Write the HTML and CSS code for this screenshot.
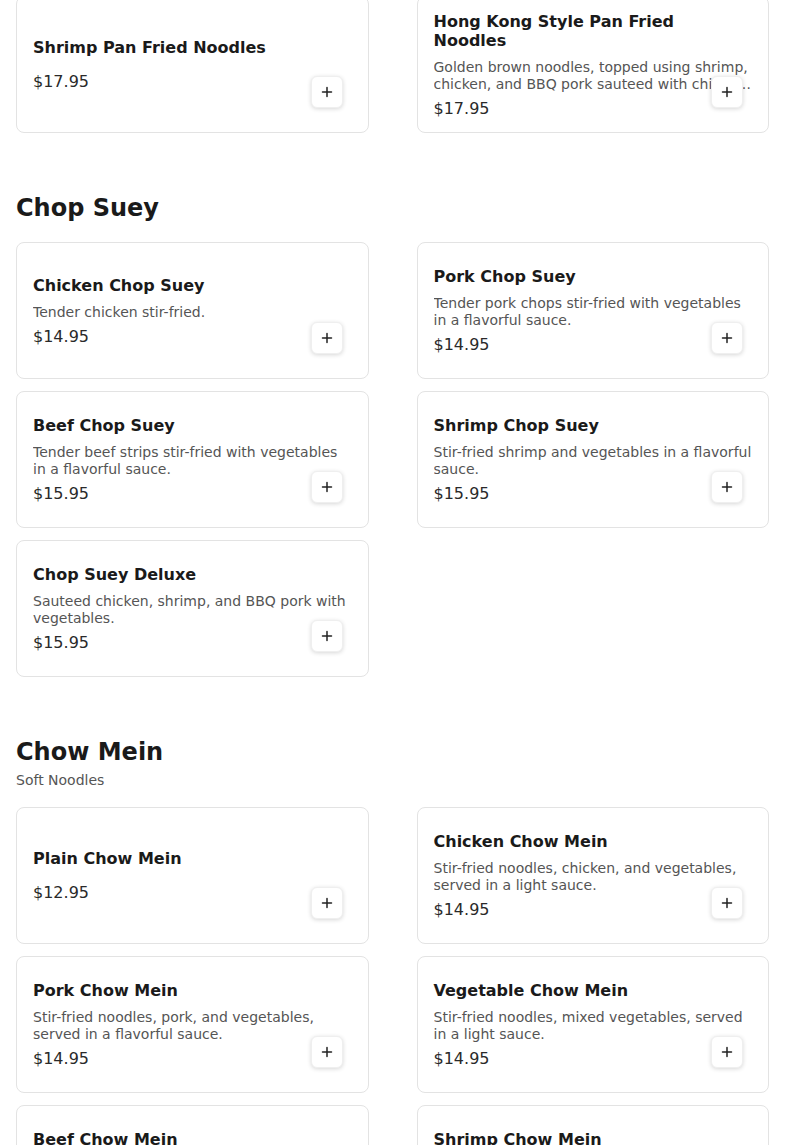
FILE: index.html
```html
<!DOCTYPE html>
<html>
<head>
<meta charset="utf-8">
<link rel="stylesheet" href="styles.css">
</head>
<body>
<main class="menu">
  <section class="section first">
    <div class="grid">
      <div class="card">
        <div class="info">
          <h3 class="name">Shrimp Pan Fried Noodles</h3>
          <div class="price">$17.95</div>
        </div>
        <button class="add" aria-label="Add"><svg viewBox="0 0 12 12" width="12" height="12"><path d="M6 1.5v9M1.5 6h9" stroke="#222" stroke-width="1.5" stroke-linecap="round"/></svg></button>
      </div>
      <div class="card">
        <div class="info">
          <h3 class="name">Hong Kong Style Pan Fried Noodles</h3>
          <p class="desc">Golden brown noodles, topped using shrimp, chicken, and BBQ pork sauteed with chinese vegetables in a brown sauce.</p>
          <div class="price">$17.95</div>
        </div>
        <button class="add" aria-label="Add"><svg viewBox="0 0 12 12" width="12" height="12"><path d="M6 1.5v9M1.5 6h9" stroke="#222" stroke-width="1.5" stroke-linecap="round"/></svg></button>
      </div>
    </div>
  </section>

  <section class="section">
    <header class="section-head">
      <h2 class="title">Chop Suey</h2>
    </header>
    <div class="grid">
      <div class="card">
        <div class="info">
          <h3 class="name">Chicken Chop Suey</h3>
          <p class="desc">Tender chicken stir-fried.</p>
          <div class="price">$14.95</div>
        </div>
        <button class="add" aria-label="Add"><svg viewBox="0 0 12 12" width="12" height="12"><path d="M6 1.5v9M1.5 6h9" stroke="#222" stroke-width="1.5" stroke-linecap="round"/></svg></button>
      </div>
      <div class="card">
        <div class="info">
          <h3 class="name">Pork Chop Suey</h3>
          <p class="desc">Tender pork chops stir-fried with vegetables in a flavorful sauce.</p>
          <div class="price">$14.95</div>
        </div>
        <button class="add" aria-label="Add"><svg viewBox="0 0 12 12" width="12" height="12"><path d="M6 1.5v9M1.5 6h9" stroke="#222" stroke-width="1.5" stroke-linecap="round"/></svg></button>
      </div>
      <div class="card">
        <div class="info">
          <h3 class="name">Beef Chop Suey</h3>
          <p class="desc">Tender beef strips stir-fried with vegetables in a flavorful sauce.</p>
          <div class="price">$15.95</div>
        </div>
        <button class="add" aria-label="Add"><svg viewBox="0 0 12 12" width="12" height="12"><path d="M6 1.5v9M1.5 6h9" stroke="#222" stroke-width="1.5" stroke-linecap="round"/></svg></button>
      </div>
      <div class="card">
        <div class="info">
          <h3 class="name">Shrimp Chop Suey</h3>
          <p class="desc">Stir-fried shrimp and vegetables in a flavorful sauce.</p>
          <div class="price">$15.95</div>
        </div>
        <button class="add" aria-label="Add"><svg viewBox="0 0 12 12" width="12" height="12"><path d="M6 1.5v9M1.5 6h9" stroke="#222" stroke-width="1.5" stroke-linecap="round"/></svg></button>
      </div>
      <div class="card">
        <div class="info">
          <h3 class="name">Chop Suey Deluxe</h3>
          <p class="desc">Sauteed chicken, shrimp, and BBQ pork with vegetables.</p>
          <div class="price">$15.95</div>
        </div>
        <button class="add" aria-label="Add"><svg viewBox="0 0 12 12" width="12" height="12"><path d="M6 1.5v9M1.5 6h9" stroke="#222" stroke-width="1.5" stroke-linecap="round"/></svg></button>
      </div>
    </div>
  </section>

  <section class="section">
    <header class="section-head">
      <h2 class="title">Chow Mein</h2>
      <p class="subtitle">Soft Noodles</p>
    </header>
    <div class="grid">
      <div class="card">
        <div class="info">
          <h3 class="name">Plain Chow Mein</h3>
          <div class="price">$12.95</div>
        </div>
        <button class="add" aria-label="Add"><svg viewBox="0 0 12 12" width="12" height="12"><path d="M6 1.5v9M1.5 6h9" stroke="#222" stroke-width="1.5" stroke-linecap="round"/></svg></button>
      </div>
      <div class="card">
        <div class="info">
          <h3 class="name">Chicken Chow Mein</h3>
          <p class="desc">Stir-fried noodles, chicken, and vegetables, served in a light sauce.</p>
          <div class="price">$14.95</div>
        </div>
        <button class="add" aria-label="Add"><svg viewBox="0 0 12 12" width="12" height="12"><path d="M6 1.5v9M1.5 6h9" stroke="#222" stroke-width="1.5" stroke-linecap="round"/></svg></button>
      </div>
      <div class="card">
        <div class="info">
          <h3 class="name">Pork Chow Mein</h3>
          <p class="desc">Stir-fried noodles, pork, and vegetables, served in a flavorful sauce.</p>
          <div class="price">$14.95</div>
        </div>
        <button class="add" aria-label="Add"><svg viewBox="0 0 12 12" width="12" height="12"><path d="M6 1.5v9M1.5 6h9" stroke="#222" stroke-width="1.5" stroke-linecap="round"/></svg></button>
      </div>
      <div class="card">
        <div class="info">
          <h3 class="name">Vegetable Chow Mein</h3>
          <p class="desc">Stir-fried noodles, mixed vegetables, served in a light sauce.</p>
          <div class="price">$14.95</div>
        </div>
        <button class="add" aria-label="Add"><svg viewBox="0 0 12 12" width="12" height="12"><path d="M6 1.5v9M1.5 6h9" stroke="#222" stroke-width="1.5" stroke-linecap="round"/></svg></button>
      </div>
      <div class="card">
        <div class="info">
          <h3 class="name">Beef Chow Mein</h3>
          <p class="desc">Stir-fried noodles, beef, and vegetables, served in a flavorful sauce.</p>
          <div class="price">$15.95</div>
        </div>
        <button class="add" aria-label="Add"><svg viewBox="0 0 12 12" width="12" height="12"><path d="M6 1.5v9M1.5 6h9" stroke="#222" stroke-width="1.5" stroke-linecap="round"/></svg></button>
      </div>
      <div class="card">
        <div class="info">
          <h3 class="name">Shrimp Chow Mein</h3>
          <p class="desc">Stir-fried noodles, shrimp, and vegetables, served in a flavorful sauce.</p>
          <div class="price">$15.95</div>
        </div>
        <button class="add" aria-label="Add"><svg viewBox="0 0 12 12" width="12" height="12"><path d="M6 1.5v9M1.5 6h9" stroke="#222" stroke-width="1.5" stroke-linecap="round"/></svg></button>
      </div>
    </div>
  </section>
</main>
</body>
</html>
```

FILE: styles.css
```css
* { box-sizing: border-box; }

html, body {
  margin: 0;
  padding: 0;
  background: #ffffff;
  font-family: "DejaVu Sans", "Noto Sans", sans-serif;
  color: #1a1a1a;
  overflow: hidden;
}

.menu {
  padding: 0 16px;
  display: flex;
  flex-direction: column;
  gap: 61px;
}

.section.first {
  margin-top: -4px;
}

.section-head {
  margin-bottom: 19px;
}

.title {
  margin: 0;
  font-size: 24px;
  line-height: 29px;
  font-weight: 700;
  color: #1a1a1a;
}

.subtitle {
  margin: 5px 0 -1px;
  font-size: 14px;
  line-height: 17px;
  color: #555555;
}

.grid {
  display: grid;
  grid-template-columns: 1fr 1fr;
  column-gap: 48px;
  row-gap: 12px;
}

.card {
  position: relative;
  height: 137px;
  border: 1px solid #e3e3e3;
  border-radius: 8px;
  background: #fff;
  padding: 16px;
  display: flex;
  align-items: center;
}

.info {
  width: 100%;
  display: flex;
  flex-direction: column;
}

.name {
  margin: 0 0 9px;
  font-size: 16px;
  line-height: 19px;
  font-weight: 700;
  color: #1a1a1a;
}

.desc {
  margin: 0;
  font-size: 14px;
  line-height: 17px;
  color: #555555;
  display: -webkit-box;
  -webkit-line-clamp: 2;
  -webkit-box-orient: vertical;
  overflow: hidden;
}

.price {
  margin-top: 6px;
  font-size: 16px;
  line-height: 19px;
  color: #2a2a2a;
}

.add {
  position: absolute;
  right: 25px;
  bottom: 24px;
  width: 32px;
  height: 32px;
  padding: 0;
  border: 1px solid #efefef;
  border-radius: 6px;
  background: #ffffff;
  box-shadow: 0 1px 4px rgba(0, 0, 0, 0.16);
  display: flex;
  align-items: center;
  justify-content: center;
  cursor: pointer;
}

.add svg {
  display: block;
}
```
